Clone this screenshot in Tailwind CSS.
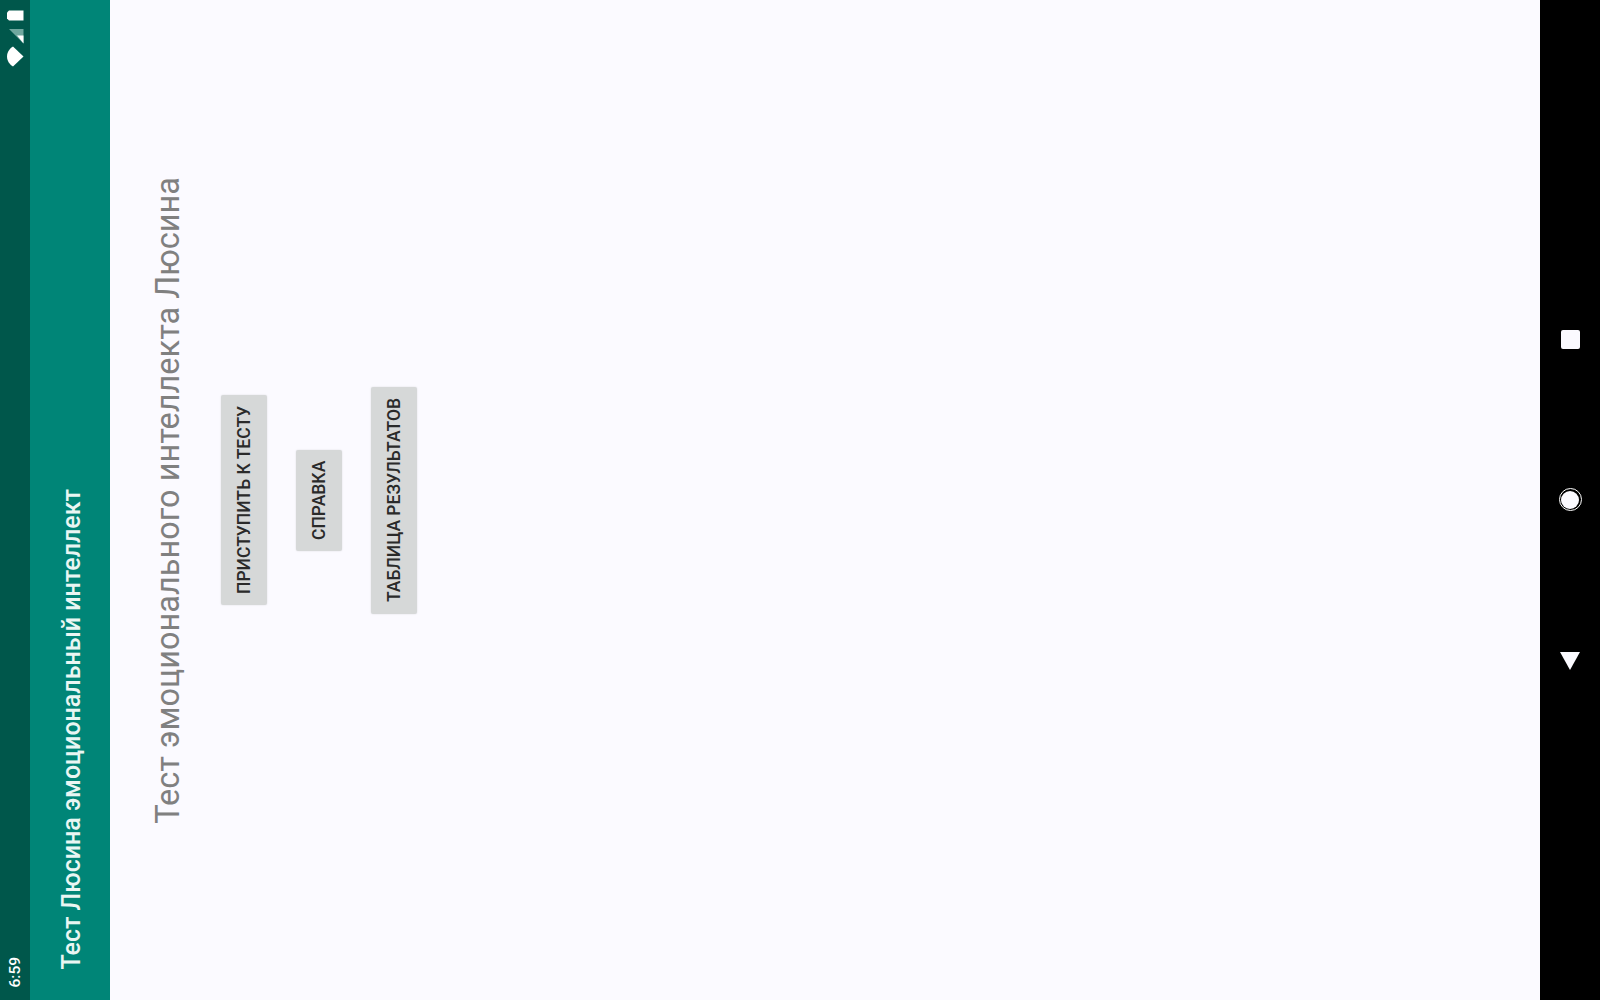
<!DOCTYPE html>
<html lang="ru">
<head>
    <meta charset="UTF-8">
    <title>Тест Люсина эмоциональный интеллект</title>
    <script src="https://cdn.jsdelivr.net/npm/@tailwindcss/browser@4"></script>
</head>
<body class="m-0 overflow-hidden bg-black font-['Roboto',sans-serif]">
    <div class="flex h-[1000px] w-[1600px]">
        <!-- Status bar -->
        <div class="flex h-full w-[30px] shrink-0 flex-col items-center justify-between bg-[#00574b] pt-[10px] pb-[12px]">
            <svg width="30" height="57" viewBox="0 0 30 57" fill="#fff">
                <path d="M9 0.500h14.500v10h-14.500l-2-2v-6z" />
                <path d="M9 19h14.500v14.500z" fill="#6fa89f" />
                <path d="M17 25.500h6.500v8z" />
                <path d="M13 36.500l10.500 10l-10.500 10c-3-1.500-6-5.500-6-10s3-8.500 6-10z" />
            </svg>
            <span class="text-[15.500px] leading-[20px] font-medium text-white [writing-mode:vertical-rl] rotate-180">6:59</span>
        </div>
        <!-- Toolbar -->
        <div class="flex h-full w-[80px] shrink-0 items-end justify-center bg-[#008577] pb-[30px] pl-[4px]">
            <span class="text-[25px] leading-[28px] font-medium whitespace-nowrap text-[#e9f6f3] [writing-mode:vertical-rl] rotate-180">Тест Люсина эмоциональный интеллект</span>
        </div>
        <!-- Content -->
        <div class="flex h-full flex-1 items-stretch bg-[#fbfaff] pl-[38px]">
            <div class="flex h-full w-[40px] items-end pb-[176px]">
                <span class="text-[32.500px] leading-[40px] whitespace-nowrap text-[#808080] [writing-mode:vertical-rl] rotate-180">Тест эмоционального интеллекта Люсина</span>
            </div>
            <div class="ml-[33px] flex h-full items-center gap-[29px]">
                <button class="h-[210px] w-[46px] rounded-[2px] bg-[#d6d8d8] text-[17.500px] font-medium text-[#2a2a2a] shadow-[0_0_2px_rgba(0,0,0,0.12)] [writing-mode:vertical-rl] rotate-180">ПРИСТУПИТЬ К ТЕСТУ</button>
                <button class="h-[101px] w-[46px] rounded-[2px] bg-[#d6d8d8] text-[17.500px] font-medium text-[#2a2a2a] shadow-[0_0_2px_rgba(0,0,0,0.12)] [writing-mode:vertical-rl] rotate-180">СПРАВКА</button>
                <button class="h-[227px] w-[46px] rounded-[2px] bg-[#d6d8d8] text-[17.500px] font-medium text-[#2a2a2a] shadow-[0_0_2px_rgba(0,0,0,0.12)] [writing-mode:vertical-rl] rotate-180">ТАБЛИЦА РЕЗУЛЬТАТОВ</button>
            </div>
        </div>
        <!-- Navigation bar -->
        <div class="flex h-full w-[60px] shrink-0 flex-col items-center bg-black pt-[330px]">
            <div class="h-[19px] w-[19px] rounded-[2px] bg-[#fbfaff]"></div>
            <div class="mt-[139px] flex h-[23px] w-[23px] items-center justify-center rounded-full border border-white">
                <div class="h-[18px] w-[18px] rounded-full bg-[#fbfaff]"></div>
            </div>
            <svg class="mt-[140px]" width="22" height="20" viewBox="0 0 22 20" fill="#fbfaff"><path d="M1 1h20l-10 18z" /></svg>
        </div>
    </div>
</body>
</html>
